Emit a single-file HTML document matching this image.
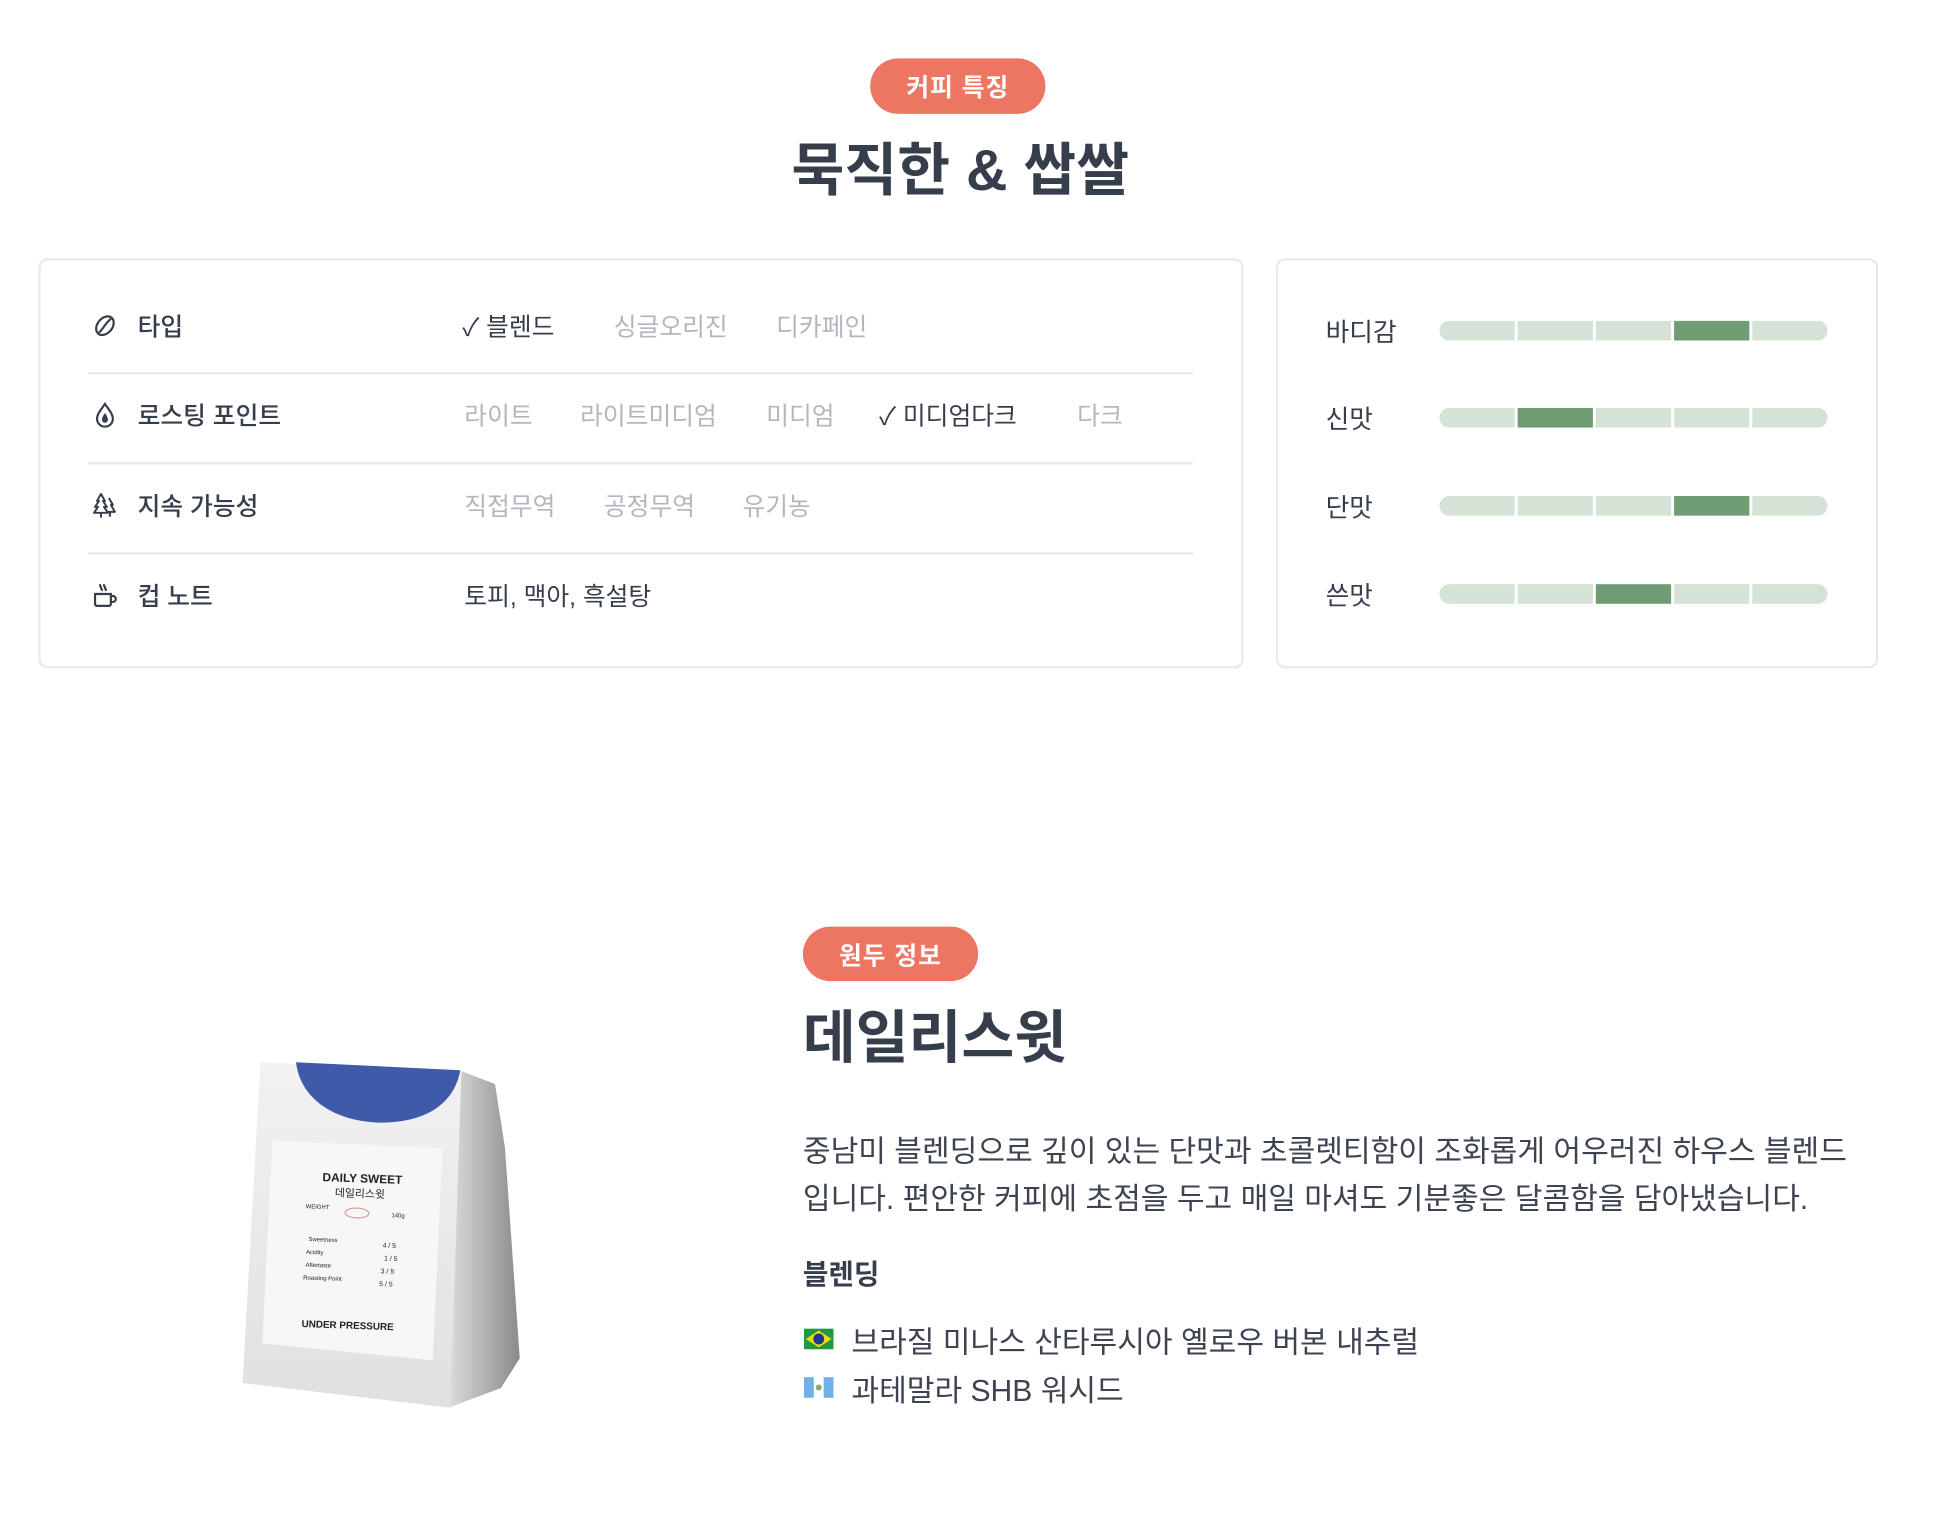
<!DOCTYPE html>
<html><head><meta charset="utf-8">
<style>
*{margin:0;padding:0;box-sizing:border-box}
body{width:1940px;height:1530px;background:#fff;position:relative;overflow:hidden;font-family:"Liberation Sans","Noto Sans CJK KR",sans-serif;color:#363d4b}
#w{position:absolute;left:0;top:0;width:1940px;height:1530px;transform:scale(0.99);transform-origin:0 0}
.abs{position:absolute}
.badge{position:absolute;background:#ec7662;color:#fff;font-weight:700;font-size:25px;border-radius:28px;display:flex;align-items:center;justify-content:center;letter-spacing:1px}
.card{position:absolute;border:2px solid #e6e6eb;border-radius:9px}
.lbl{position:absolute;left:139px;font-size:25px;font-weight:500;color:#363d4b;transform:translateY(-50%)}
.opt{position:absolute;font-size:25px;color:#b3b6be;transform:translateY(-50%);white-space:nowrap}
.opt.on{color:#363d4b}
.div{position:absolute;left:89px;width:1116px;height:2px;background:#e6e6eb}
.ico{position:absolute;left:93px;width:26px;height:26px;transform:translateY(-50%)}
.tl{position:absolute;left:1339px;font-size:26px;color:#363d4b;transform:translateY(-50%)}
.bar{position:absolute;left:1454px;width:392px;height:20px;display:flex;gap:3px;border-radius:10px;overflow:hidden;transform:translateY(-50%)}
.bar i{flex:1;background:#d4e3d6}
.bar i.d{background:#6f9c72}
.p{position:absolute;left:811px;font-size:30.4px;color:#3d4350;white-space:nowrap}
</style></head><body>
<div id="w">
<div class="badge" style="left:879px;top:59px;width:177px;height:56px">커피 특징</div>
<div class="abs" style="left:0;width:1940px;top:125px;text-align:center;font-size:58px;font-weight:700;color:#363d4b">묵직한 &amp; 쌉쌀</div>

<div class="card" style="left:39px;top:261px;width:1217px;height:414px"></div>
<div class="card" style="left:1289px;top:261px;width:608px;height:414px"></div>

<svg class="ico" style="top:329px" viewBox="0 0 26 26" fill="none" stroke="#363d4b" stroke-width="2.2"><ellipse cx="13" cy="13" rx="7.5" ry="10.5" transform="rotate(40 13 13)"/><path d="M7 20 C12 15 13 11 19 6"/></svg>
<svg class="ico" style="top:419px" viewBox="0 0 26 26" fill="none" stroke="#363d4b" stroke-width="2.2"><path d="M13 2 C9 8 5 12 5 17 a8 8 0 0 0 16 0 C21 12 17 8 13 2Z"/><path d="M13 11 C11 14 10 16 10 18 a3 3 0 0 0 6 0 C16 16 15 14 13 11Z" fill="#363d4b" stroke="none"/></svg>
<svg class="ico" style="top:510px" viewBox="0 0 26 26" fill="none" stroke="#363d4b" stroke-width="2" stroke-linejoin="round"><path d="M9 2 L5 9 H7 L3 15 H6 L2 21 H16 L12 15 H15 L11 9 H13 Z"/><path d="M17 6 L21 13 H19 L23 20 H16"/><path d="M9 21 V26 M18 20 V25"/></svg>
<svg class="ico" style="top:601px" viewBox="0 0 26 26" fill="none" stroke="#363d4b" stroke-width="2.2" stroke-linecap="round"><path d="M3 12 H19 V22 a2 2 0 0 1 -2 2 H5 a2 2 0 0 1 -2 -2Z"/><path d="M19 14 h2 a3 3 0 0 1 0 6 h-2"/><path d="M8 3 l2 5 M12 3 l2 5"/></svg>

<div class="lbl" style="top:329px">타입</div>
<div class="lbl" style="top:419px">로스팅 포인트</div>
<div class="lbl" style="top:510px">지속 가능성</div>
<div class="lbl" style="top:601px">컵 노트</div>

<div class="div" style="top:376px"></div>
<div class="div" style="top:467px"></div>
<div class="div" style="top:558px"></div>

<div class="opt on" style="left:467px;top:329px">✓ 블렌드</div>
<div class="opt" style="left:620px;top:329px">싱글오리진</div>
<div class="opt" style="left:784px;top:329px">디카페인</div>

<div class="opt" style="left:469px;top:419px">라이트</div>
<div class="opt" style="left:586px;top:419px">라이트미디엄</div>
<div class="opt" style="left:774px;top:419px">미디엄</div>
<div class="opt on" style="left:888px;top:419px">✓ 미디엄다크</div>
<div class="opt" style="left:1088px;top:419px">다크</div>

<div class="opt" style="left:469px;top:510px">직접무역</div>
<div class="opt" style="left:610px;top:510px">공정무역</div>
<div class="opt" style="left:750px;top:510px">유기농</div>

<div class="opt on" style="left:469px;top:601px">토피, 맥아, 흑설탕</div>

<div class="tl" style="top:334px">바디감</div>
<div class="tl" style="top:422px">신맛</div>
<div class="tl" style="top:511px">단맛</div>
<div class="tl" style="top:600px">쓴맛</div>
<div class="bar" style="top:334px"><i></i><i></i><i></i><i class="d"></i><i></i></div>
<div class="bar" style="top:422px"><i></i><i class="d"></i><i></i><i></i><i></i></div>
<div class="bar" style="top:511px"><i></i><i></i><i></i><i class="d"></i><i></i></div>
<div class="bar" style="top:600px"><i></i><i></i><i class="d"></i><i></i><i></i></div>

<svg class="abs" style="left:3px;top:12px" width="1940" height="1530">
<defs><linearGradient id="sd" x1="0" x2="1"><stop offset="0" stop-color="#dcdcdc"/><stop offset="1" stop-color="#8a8a8a"/></linearGradient>
<linearGradient id="fr" x1="0" y1="0" x2="0" y2="1"><stop offset="0" stop-color="#f2f2f2"/><stop offset="1" stop-color="#e0e0e0"/></linearGradient></defs>
<polygon points="463,1070 497,1083 507,1147 522,1360 503,1390 450,1410" fill="url(#sd)"/>
<polygon points="260,1061 463,1070 452,1410 242,1385" fill="url(#fr)"/>
<path d="M296,1061 L462,1069 C455,1105 425,1122 380,1122 C330,1120 300,1095 296,1061Z" fill="#3f5aa8"/>
<polygon points="272,1140 444,1148 434,1362 262,1345" fill="#f7f7f7"/>
<g font-family="Liberation Sans, sans-serif" fill="#222" transform="rotate(2 350 1200)">
<text x="322" y="1182" font-size="12" font-weight="700">DAILY SWEET</text>
<text x="335" y="1197" font-size="11" font-family="Noto Sans CJK KR">데일리스윗</text>
<text x="306" y="1210" font-size="6">WEIGHT</text><ellipse cx="358" cy="1213" rx="12" ry="5" fill="none" stroke="#d88" stroke-width="1"/><text x="393" y="1216" font-size="6">140g</text>
<text x="310" y="1243" font-size="6">Sweetness</text><text x="385" y="1247" font-size="7">4 / 5</text>
<text x="308" y="1256" font-size="6">Acidity</text><text x="387" y="1260" font-size="7">1 / 5</text>
<text x="308" y="1269" font-size="6">Aftertaste</text><text x="384" y="1273" font-size="7">3 / 5</text>
<text x="306" y="1282" font-size="6">Roasting Point</text><text x="383" y="1286" font-size="7">5 / 5</text>
<text x="306" y="1330" font-size="10" font-weight="700">UNDER PRESSURE</text>
</g>
</svg>

<div class="badge" style="left:811px;top:936px;width:177px;height:55px">원두 정보</div>
<div class="abs" style="left:811px;top:1001px;font-size:58px;font-weight:700;color:#363d4b">데일리스윗</div>
<div class="p" style="top:1138px">중남미 블렌딩으로 깊이 있는 단맛과 초콜렛티함이 조화롭게 어우러진 하우스 블렌드</div>
<div class="p" style="top:1186px">입니다. 편안한 커피에 초점을 두고 매일 마셔도 기분좋은 달콤함을 담아냈습니다.</div>
<div class="abs" style="left:811px;top:1266px;font-size:28px;font-weight:700;color:#363d4b">블렌딩</div>
<svg class="abs" style="left:812px;top:1342px" width="30" height="21"><rect width="30" height="21" fill="#1f9a3e"/><polygon points="15,2 28,10.5 15,19 2,10.5" fill="#f5d90f"/><circle cx="15" cy="10.5" r="5.5" fill="#1e3a8a"/></svg>
<div class="p" style="left:860px;top:1331px">브라질 미나스 산타루시아 옐로우 버본 내추럴</div>
<svg class="abs" style="left:812px;top:1391px" width="30" height="21"><rect width="30" height="21" fill="#fff"/><rect width="10" height="21" fill="#6fb2e6"/><rect x="20" width="10" height="21" fill="#6fb2e6"/><circle cx="15" cy="10.5" r="3" fill="#8aa870"/></svg>
<div class="p" style="left:860px;top:1380px">과테말라 SHB 워시드</div>
</div>
</body></html>
